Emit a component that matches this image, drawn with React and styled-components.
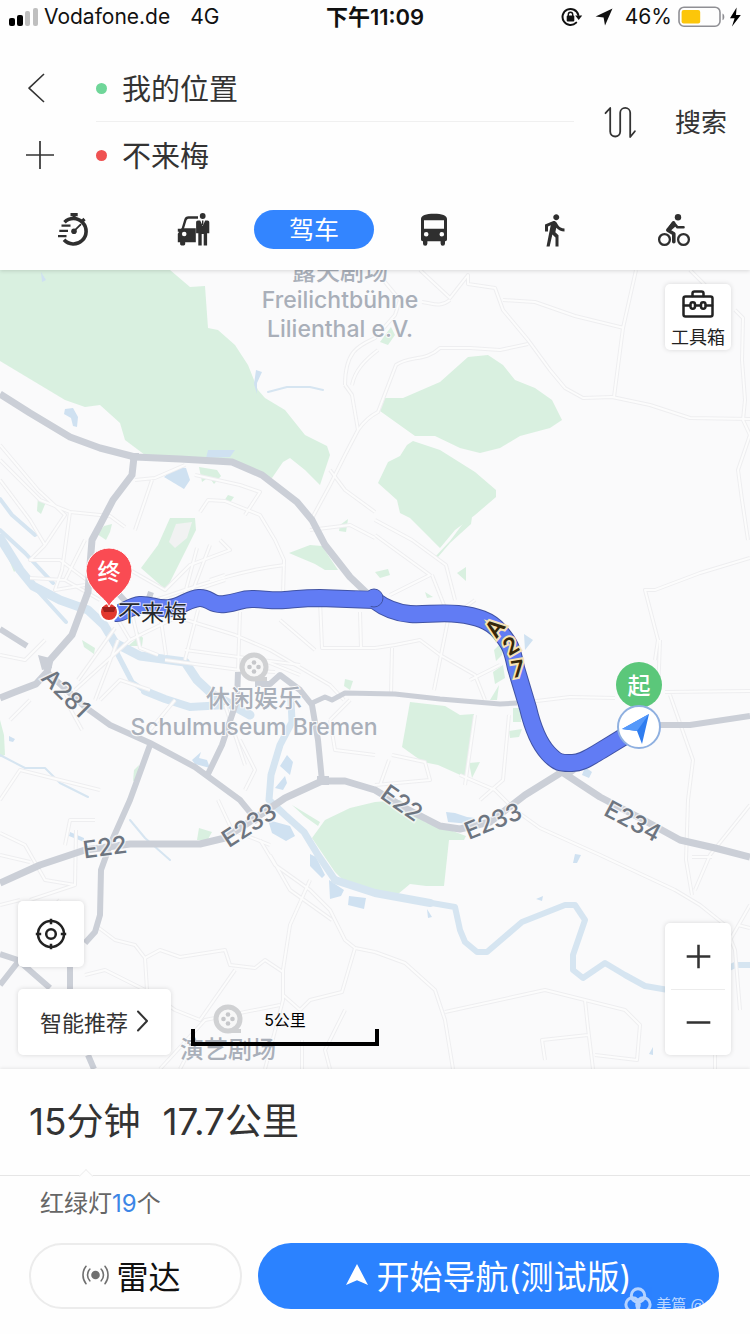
import React from 'react';
import styled, { createGlobalStyle } from 'styled-components';
import { MdDirectionsWalk } from 'react-icons/md';

const GlobalStyle = createGlobalStyle`
  *, *::before, *::after { box-sizing: border-box; }
  body {
    margin: 0;
    background: #fefefe;
    color: #333;
    font-family: Inter, 'Noto Sans CJK SC', sans-serif;
  }
  button, input { font: inherit; color: inherit; border: 0; padding: 0; background: none; }
  button { cursor: pointer; }
  svg { display: block; flex: none; }
`;

const Screen = styled.div`
  display: flex;
  flex-direction: column;
  min-height: 100vh;
`;

/* ---------- status bar ---------- */

const StatusBar = styled.div`
  display: grid;
  grid-template-columns: 1fr auto 1fr;
  align-items: center;
  height: 34px;
  padding: 0 8px;
  color: #111;
  font-size: 21px;
  line-height: 32px;
`;

const StatusGroup = styled.div`
  display: flex;
  align-items: center;
  justify-content: ${(p) => (p.$end ? 'flex-end' : 'flex-start')};
  gap: ${(p) => p.$gap}px;
`;

const Clock = styled.time`
  font-size: 22px;
  font-weight: 600;
`;

/* ---------- header ---------- */

const Header = styled.header`
  position: relative;
  z-index: 2;
  background: #fefefe;
  box-shadow: 0 1px 4px rgba(0, 0, 0, 0.14);
`;

const RouteForm = styled.form`
  display: flex;
  align-items: center;
  padding: 21px 23px 0 0;
`;

const SideButtons = styled.div`
  display: flex;
  flex-direction: column;
  width: 96px;
`;

const IconButton = styled.button`
  display: flex;
  align-items: center;
  height: 67px;
  padding: 0 0 2px 24px;
`;

const Fields = styled.div`
  flex: 1;
  min-width: 0;
`;

const Field = styled.label`
  display: flex;
  align-items: center;
  gap: 15px;
  height: 67px;
  border-bottom: ${(p) => (p.$divided ? '1px solid #f0f0f0' : '0')};

  &::before {
    content: '';
    width: 11px;
    height: 11px;
    border-radius: 50%;
    background: ${(p) => p.$dot};
  }

  input {
    flex: 1;
    min-width: 0;
    height: 46px;
    padding-bottom: 3px;
    font-size: 29px;
    outline: none;
  }
`;

const SwapButton = styled.button`
  margin: 0 38px 0 30px;
`;

const SearchButton = styled.button`
  padding-top: 2px;
  font-size: 26px;
  line-height: 40px;
`;

const ModeBar = styled.nav`
  display: flex;
  padding: 21px 16px 21px 14px;
`;

const ModeButton = styled.button`
  flex: 1;
  display: flex;
  align-items: center;
  justify-content: center;
  height: 39px;
  border-radius: 20px;
  font-size: 25px;
  line-height: 36px;
  color: ${(p) => (p.$active ? '#fff' : '#2f2f2f')};
  background: ${(p) => (p.$active ? '#3385ff' : 'transparent')};
`;

/* ---------- map ---------- */

const MapArea = styled.main`
  position: relative;
  flex: 1;
  min-height: 799px;
  overflow: hidden;
  background: #fafafb;
`;

const MapSvg = styled.svg`
  position: absolute;
  inset: 0;
  width: 100%;
  height: 100%;
`;

const PlaceText = styled.text`
  font-size: ${(p) => p.$size || 23}px;
  font-weight: 500;
  fill: #a9afb9;
  text-anchor: middle;
  paint-order: stroke;
  stroke: #fafafb;
  stroke-width: 2px;
`;

const RoadText = styled.text`
  font-size: 24px;
  font-weight: 500;
  fill: #6d7580;
  text-anchor: middle;
  dominant-baseline: central;
  paint-order: stroke;
  stroke: rgba(250, 250, 251, 0.7);
  stroke-width: 3px;
`;

const ShieldText = styled(RoadText)`
  font-size: 23px;
  font-weight: 600;
  fill: #35270a;
  stroke: #f6e3b4;
  stroke-width: 4px;
`;

const PinText = styled.text`
  font-size: 23px;
  font-weight: 500;
  fill: #fff;
  text-anchor: middle;
`;

const CityText = styled.text`
  font-size: 23px;
  font-weight: 400;
  fill: #26282c;
  paint-order: stroke;
  stroke: rgba(255, 255, 255, 0.8);
  stroke-width: 2px;
`;

const MapControls = styled.div`
  position: absolute;
  inset: 0;
  display: flex;
  align-items: flex-end;
  padding: 14px 19px 14px 18px;
`;

const ControlColumn = styled.div`
  display: flex;
  flex-direction: column;
  justify-content: ${(p) => (p.$spread ? 'space-between' : 'flex-end')};
  gap: 22px;
  height: 100%;
  margin-left: ${(p) => (p.$spread ? 'auto' : '0')};
`;

const Card = styled.div`
  width: 66px;
  border-radius: 5px;
  background: #fff;
  box-shadow: 0 0 5px rgba(0, 0, 0, 0.14);
`;

const SquareButton = styled(Card).attrs({ as: 'button' })`
  display: flex;
  flex-direction: column;
  align-items: center;
  justify-content: center;
  gap: 8px;
  height: 66px;
  padding-top: ${(p) => (p.$labelled ? 6 : 0)}px;
  font-size: 18px;
  line-height: 24px;
  color: #222;
`;

const RecommendButton = styled(Card).attrs({ as: 'button' })`
  display: flex;
  align-items: center;
  justify-content: center;
  gap: 8px;
  width: 153px;
  height: 66px;
  padding-bottom: 3px;
  font-size: 22px;
`;

const ZoomCard = styled(Card)`
  padding: 0 6px;

  button {
    display: flex;
    align-items: center;
    justify-content: center;
    width: 100%;
    height: 66px;
  }

  button + button {
    border-top: 1px solid #ececec;
  }
`;

const ScaleBar = styled.div`
  width: 188px;
  height: 36px;
  margin: 0 0 9px 20px;
  font-size: 16px;
  line-height: 20px;
  text-align: center;
  color: #000;

  &::after {
    content: '';
    display: block;
    height: 17px;
    margin-top: -1px;
    border: solid #000;
    border-width: 0 4px 4px;
  }
`;

/* ---------- bottom panel ---------- */

const Panel = styled.footer`
  position: relative;
  z-index: 2;
  background: #fefefe;
  box-shadow: 0 -1px 3px rgba(0, 0, 0, 0.08);
`;

const Summary = styled.h1`
  position: relative;
  display: flex;
  gap: 22px;
  margin: 0;
  padding: 26px 29px;
  border-bottom: 1px solid #e6e6e6;
  font-size: 37px;
  font-weight: 400;
  line-height: 54px;

  &::after {
    content: '';
    position: absolute;
    left: 81px;
    bottom: -6px;
    width: 10px;
    height: 10px;
    border: solid #f0f0f0;
    border-width: 1px 0 0 1px;
    background: #fefefe;
    transform: rotate(45deg);
  }
`;

const Lights = styled.p`
  margin: 0;
  padding: 10px 40px 21px;
  color: #666;
  font-size: 24px;
  line-height: 36px;

  b {
    color: #3c86e6;
    font-weight: 400;
  }
`;

const Actions = styled.div`
  display: flex;
  gap: 16px;
  padding: 0 31px 26px 29px;
`;

const ActionButton = styled.button`
  position: relative;
  display: flex;
  align-items: center;
  justify-content: center;
  gap: 7px;
  flex: ${(p) => (p.$primary ? '1 1 0' : '0 0 213px')};
  height: 66px;
  padding: ${(p) => (p.$primary ? '0 0 3px' : '0 8px 3px 0')};
  overflow: hidden;
  border: ${(p) => (p.$primary ? '0' : '2px solid #ececec')};
  border-radius: 33px;
  font-size: ${(p) => (p.$primary ? 33 : 32)}px;
  color: ${(p) => (p.$primary ? '#fff' : '#111')};
  background: ${(p) => (p.$primary ? '#2b82ff' : '#fefefe')};
`;

const Watermark = styled.span`
  position: absolute;
  right: 14px;
  bottom: -6px;
  display: flex;
  align-items: flex-end;
  gap: 4px;
  font-size: 15px;
  line-height: 20px;
  color: rgba(255, 255, 255, 0.7);
`;

/* ---------- icons ---------- */

const line = { fill: 'none', stroke: 'currentColor', strokeLinecap: 'round', strokeLinejoin: 'round' };

const SignalIcon = () => (
  <svg width="32" height="20" viewBox="0 0 32 20">
    <rect x="1" y="11" width="6" height="8" rx="2" fill="#000" />
    <rect x="9" y="8" width="6" height="11" rx="2" fill="#000" />
    <rect x="17" y="4" width="5" height="15" rx="2" fill="#bfbfbf" />
    <rect x="25" y="1" width="5" height="18" rx="2" fill="#bfbfbf" />
  </svg>
);

const RotationLockIcon = () => (
  <svg width="22" height="20" viewBox="0 0 22 20">
    <path d="M15.2 15.6A8 8 0 1 1 17.3 8" {...line} strokeWidth="2" />
    <path d="M14.2 8.5h7l-3.5 4.6z" fill="currentColor" />
    <rect x="5.7" y="8.6" width="7.6" height="6" rx="1" fill="currentColor" />
    <path d="M7.3 9V7.4a2.2 2.2 0 0 1 4.4 0V9" {...line} strokeWidth="1.4" />
  </svg>
);

const LocationIcon = () => (
  <svg width="18" height="18" viewBox="0 0 18 18">
    <path d="M17.5.5 10 17.5 8.6 9.6.6 8.4z" fill="currentColor" />
  </svg>
);

const BatteryIcon = () => (
  <svg width="64" height="22" viewBox="0 0 64 22">
    <rect x="1" y="1.2" width="41" height="19" rx="5" fill="none" stroke="#8f8f94" strokeWidth="1.6" />
    <rect x="3.6" y="4" width="18.6" height="13.6" rx="2" fill="#fcc60a" />
    <path d="M44.5 7.5c2.4 1 2.4 5.8 0 6.8z" fill="#8f8f94" />
    <path d="M58.6 1.5 52 12.200h4.600L54 20.500l8.800-11.600H58z" fill="#000" />
  </svg>
);

const BackIcon = () => (
  <svg width="26" height="32" viewBox="0 0 26 32">
    <path d="M20 2 5 16.200 20 30" {...line} strokeWidth="1.600" strokeLinecap="butt" />
  </svg>
);

const PlusIcon = ({ size = 32, weight = 1.7 }) => (
  <svg width={size} height={size} viewBox="0 0 32 32">
    <path d="M2 16h28M16 2v28" fill="none" stroke="currentColor" strokeWidth={weight} />
  </svg>
);

const MinusIcon = () => (
  <svg width="27" height="27" viewBox="0 0 32 32">
    <path d="M2 16h28" fill="none" stroke="currentColor" strokeWidth="3" />
  </svg>
);

const SwapIcon = () => (
  <svg width="33" height="33" viewBox="0 0 33 33">
    <path d="M1.500 7.200 6.200 2v23.500a5 5 0 0 0 10 0V6.800a5 5 0 0 1 10 0V31l4.700-5.700" {...line} strokeWidth="1.800" />
  </svg>
);

const TimerIcon = () => (
  <svg width="34" height="36" viewBox="0 0 34 36">
    <path d="M7.500 10.200A12.700 12.700 0 1 1 7 27.800" fill="none" stroke="currentColor" strokeWidth="3.600" />
    <path d="M13.500 2.600h7.200M17.100 3v4M24.700 9.800l2.800-2.800" fill="none" stroke="currentColor" strokeWidth="3.200" />
    <path d="M17 19.200l6.500-6.500" {...line} strokeWidth="1.800" />
    <circle cx="17" cy="19.300" r="2.800" fill="currentColor" />
    <path d="M4.500 13.700h9M2.300 18.800h8.700M1 24.100h8.500" {...line} strokeWidth="2.200" strokeLinecap="butt" />
  </svg>
);

const TaxiIcon = () => (
  <svg width="34" height="36" viewBox="0 0 34 36">
    <path d="M21 5.500H11.500c-1.800 0-2.600.8-3.100 2.400L5.500 17.500" fill="none" stroke="currentColor" strokeWidth="2.400" />
    <path d="M.8 16.800h3.500v3H.8zM4.500 16.300h14.300v14H8.200v1.800a1.400 1.400 0 0 1-1.400 1.400H4.500a1.400 1.400 0 0 1-1.400-1.400v-1.800H.8v-8.500z" fill="currentColor" />
    <circle cx="7.200" cy="22" r="2.300" fill="#fefefe" />
    <circle cx="25.700" cy="4" r="2.900" fill="currentColor" />
    <path d="M21 8.400h2.200l2.500 5.500 2.500-5.500h2.200c1.300 0 1.900.8 1.900 2v10.800h-2.200v12.300h-3.400V22h-2v11.500h-3.400V21.200h-2.200V10.400c0-1.200.6-2 1.900-2z" fill="currentColor" />
    <path d="M25 8.400h1.400v4.500H25z" fill="currentColor" />
  </svg>
);

const BusIcon = () => (
  <svg width="32" height="36" viewBox="0 0 32 36">
    <path
      fillRule="evenodd"
      fill="currentColor"
      d="M3 7c0-3.500 5-5.200 13-5.200S29 3.500 29 7v20.500a1.800 1.800 0 0 1-1.800 1.800H27v2.200a2.200 2.200 0 0 1-4.400 0v-2.200H9.400v2.200a2.200 2.200 0 0 1-4.400 0v-2.200h-.2A1.800 1.800 0 0 1 3 27.500zM6 8.200v8.500h20V8.200zM8.200 20a2.300 2.300 0 1 0 0 4.600 2.300 2.300 0 0 0 0-4.600zM23.800 20a2.300 2.300 0 1 0 0 4.600 2.300 2.300 0 0 0 0-4.600z"
    />
  </svg>
);

const BikeIcon = () => (
  <svg width="34" height="36" viewBox="0 0 34 36">
    <circle cx="7.500" cy="27.500" r="5.400" {...line} strokeWidth="2.300" />
    <circle cx="26.500" cy="27.500" r="5.400" {...line} strokeWidth="2.300" />
    <circle cx="21" cy="5.300" r="3.200" fill="currentColor" />
    <path d="M16.500 11 10.800 18.200l6 3.600v8" {...line} strokeWidth="3.600" />
    <path d="M16.500 10.500l4 4.800h6" {...line} strokeWidth="2.600" />
    <path d="M15 10l4.500 3.500-5.500 5-3.500-1.500z" fill="currentColor" />
  </svg>
);

const ToolboxIcon = () => (
  <svg width="32" height="28" viewBox="0 0 32 28">
    <g {...line} strokeWidth="2.500">
      <rect x="1.500" y="6.500" width="29" height="20" rx="2" />
      <path d="M10.500 6V3.500a2 2 0 0 1 2-2h7a2 2 0 0 1 2 2V6M2 15.500h6M13.500 15.500h5M24 15.500h6" />
      <rect x="8.500" y="12.300" width="4.500" height="6.400" rx="2.200" />
      <rect x="19" y="12.300" width="4.500" height="6.400" rx="2.200" />
    </g>
  </svg>
);

const LocateIcon = () => (
  <svg width="32" height="32" viewBox="0 0 32 32">
    <g {...line} strokeWidth="2.500" strokeLinecap="butt">
      <circle cx="16" cy="16" r="13" />
      <circle cx="16" cy="16" r="4.800" />
      <path d="M16 .8v5.400M16 25.800v5.400M.8 16h5.400M25.800 16h5.400" />
    </g>
  </svg>
);

const ChevronIcon = () => (
  <svg width="13" height="22" viewBox="0 0 13 22">
    <path d="M2 1.500 11 11 2 20.500" {...line} strokeWidth="2" />
  </svg>
);

const RadarIcon = () => (
  <svg width="27" height="22" viewBox="0 0 27 22" color="#707070">
    <circle cx="13.500" cy="11" r="4.300" fill="currentColor" />
    <path d="M7.800 5.200a8.500 8.500 0 0 0 0 11.600M4 2.300a14 14 0 0 0 0 17.400M19.200 5.200a8.500 8.500 0 0 1 0 11.600M23 2.300a14 14 0 0 1 0 17.400" {...line} strokeWidth="1.600" />
  </svg>
);

const NavigateIcon = () => (
  <svg width="24" height="23" viewBox="0 0 24 23">
    <path d="M12 1 23 22 12 17.200 1 22z" fill="currentColor" />
  </svg>
);

const KnotIcon = () => (
  <svg width="28" height="28" viewBox="0 0 28 28">
    <g fill="none" stroke="#fff" strokeWidth="3" opacity=".65">
      <circle cx="14" cy="8.500" r="6.700" />
      <circle cx="8.600" cy="17.500" r="6.700" />
      <circle cx="19.400" cy="17.500" r="6.700" />
    </g>
  </svg>
);

/* ---------- map data ---------- */

const parks = [
  'M0 270H170L190 287 205 286 208 328 218 330 235 345 248 365 258 390 265 398 285 410 305 435 327 446 330 455 320 485 305 470 290 458 283 462 272 478 260 475 233 460 145 455 125 440 120 423 100 405 85 407 65 400 0 361Z',
  'M385 398H403L440 382 468 357 488 355 503 365 515 380 535 388 552 400 562 420 550 428 520 436 500 448 480 453 460 448 435 436H415L380 411Z',
  'M413 441 440 450 475 472 496 490V497L475 515 455 530 440 548 430 538 410 518 400 513 397 500 378 483 388 462 400 456 407 445Z',
  'M435 557 450 541 467 518 472 517 471 524 450 543 438 557Z',
  'M410 702 445 706 460 715 474 714 467 778 438 765 423 762 402 747Z',
  'M312 838 325 820 350 808 375 802 400 800 425 822 450 830 466 836 464 840H449L444 886H426L410 884 398 894 375 893 350 887 335 872Z',
  'M170 518H195L196 530 166 590 141 568 158 545Z',
  'M289 553 310 545 322 546 338 570 325 570 315 564 296 556Z',
  'M199 467 217 470 221 476 214 484 209 477 202 482Z',
  'M104 526 112 524 110 532 106 540 97 534Z',
  'M38 497 46 502 41 514 37 511Z',
  'M199 828 212 832 207 841 197 840Z',
  'M380 342 391 327 395 335 388 345Z',
  'M457 573 466 567 466 581Z M375 572 388 569 390 575 380 578Z M425 592 433 597 427 598Z',
  'M499 645 504 639 502 655 496 661 494 650Z M493 672 503 665 505 678 495 684Z M490 700 499 685 497 700Z',
  'M513 708H521V722H513Z M509 731 522 729 519 737 510 738Z M469 763 480 762 472 778Z',
  'M135 628 143 638 142 646 128 646 135 640Z M82 640 95 648 94 654 84 647Z',
  'M345 679 353 681 350 690 344 686Z M134 770 139 765 137 780 133 781Z',
  'M292 805 320 822 318 826 304 816Z M228 495 234 497 229 504 224 501Z',
  'M340 525 348 519 346 532 339 531Z M0 720 4 735 5 755 0 757Z M10 546 20 566 14 572 7 555Z',
];

const lakes = [
  'M65 409 73 408 78 417 77 427 73 426 71 418 64 414Z M164 477 176 467 186 468 190 480 184 489Z',
  'M208 450 235 450 230 457 206 458Z M256 370 262 372 257 383 257 394 254 384Z',
  'M524 634 533 640 525 650Z M585 767 592 772 589 778 582 775Z',
  'M268 820 290 826 295 836 286 841 272 833Z M310 854 316 857 325 875 322 878 310 866Z',
  'M329 880 344 890 341 896 330 899Z M349 896 366 898 364 909 348 905Z',
  'M446 812 455 813 467 817 475 818 470 824 448 822Z M575 854 581 855 577 863 573 863Z',
  'M536 899 543 896 542 901Z M427 909 432 917 428 918Z M649 1054 653 1047 653 1055Z',
  'M280 766 287 755 293 762 290 775Z M275 788 285 776 287 783 283 790Z M192 760 201 752 199 758 207 760 210 768 195 764Z',
  'M41 272 46 280 42 282Z M9 736 15 739 13 742 9 741Z M70 832 84 838 84 842 69 836Z',
];

const rivers = [
  [9, 'M0 538 20 570 33 586 60 600 88 610 104 625 115 643 140 656 185 662 197 680 212 694 250 715'],
  [4, 'M0 530 25 553 53 583 M35 588 66 622'],
  [5, 'M108 630 118 655 132 682 145 691'],
  [8, 'M145 691 165 699 190 707 225 705'],
  [7, 'M291 700 292 722 280 745 271 775 269 800 285 815 304 832 318 855 335 880'],
  [8, 'M335 880 375 893 430 903'],
  [6, 'M420 901 455 907 460 930 465 942 477 952 487 952 522 922 565 905 575 905 585 920 573 955 573 970 583 978 605 963 625 975 645 986 680 992 735 965H750'],
  [2, 'M0 755 25 768 45 768 60 783 88 797 M268 392 287 387 310 387 323 390 M130 820 145 838 170 860'],
  [4, 'M0 499 12 515 35 535'],
];

const majorRoads = [
  [7, 'M0 394 30 413 70 437 100 448 135 457 180 459 232 462 262 475 297 502 312 520 325 545 350 577 372 598'],
  [7, 'M134 457 132 475 113 500 100 525 92 540 90 565 88 592 72 635 50 660 47 672 36 684 15 692 0 698'],
  [6, 'M0 629 27 646 M47 672 85 707 110 725 150 743 195 767 240 800 258 822'],
  [7, 'M0 883 40 865 85 850 130 844H200L225 838 260 815 285 798 322 781 345 781 375 790 405 808 440 826 460 829 490 822 525 795 562 772 600 797 640 818 680 840 715 848 750 857'],
  [6, 'M150 745 130 800 110 845 101 870 100 915 95 932 85 943 M70 965V990 M0 954 18 960 35 975 50 988 M18 962 0 985 M88 1055 94 1069'],
  [6, 'M238 672 237 700 222 745 208 774 M255 684H270L280 675 300 690 312 705 318 740 322 781'],
  [5, 'M312 703 325 697 332 700 345 693 395 694 440 699 500 704 517 703'],
  [6, 'M655 725 690 725 750 716 M115 590 126 602 M151 592 149 598'],
];

const minorRoads = [
  'M310 522 330 485 345 455 358 430 352 395 345 385 M345 385C345 350 360 345 375 338L395 315 400 300 375 270',
  'M352 385C355 370 365 360 378 350 M358 430C365 420 372 415 378 412 L396 365C410 355 425 362 440 348H470L500 350 528 344',
  'M420 270 450 298 468 275V284L495 288 503 310 528 340 550 370 565 388 583 398 612 397 650 405 690 418 750 419',
  'M503 300 535 302 575 316 624 328 M636 270 623 328 614 397 M450 300C440 308 432 303 422 302 M690 270 710 290',
  'M735 310 743 318 742 360 745 400 743 420 750 435 738 470 742 500 748 540',
  'M0 445 38 490 65 515 45 545 M0 460 40 500 70 512 110 516 125 527 M135 480 155 478 185 465 M152 480 135 530',
  'M200 512 208 500 225 501 260 515 275 540 284 560 283 595 M195 475 240 485 260 492 245 515 M330 470 345 490 375 512 M310 530 350 525 375 538',
  'M70 512 62 570 55 590 85 585 M45 545 30 560 60 560 100 590 M0 480 30 520 45 545 M130 570 165 590 190 565 230 550 220 540',
  'M197 548 184 597 M155 600C200 585 240 570 285 565 M210 545 193 590',
  'M170 615 235 635 270 650 330 685 344 700 M130 640 187 612 M185 660 198 610 M160 614 166 655 M240 612 238 670',
  'M320 600 322 648 H375 M360 612 361 648 M375 648 395 645 420 640 440 655 475 675 485 700 M250 655 300 675 M315 650 280 620',
  'M392 648 391 694 M434 690 448 620 475 600 M470 680 500 665 M375 520 412 540 446 565 455 600 M375 535 430 575 390 595 M432 575 446 610',
  'M100 590 130 640 75 690 M115 628 78 680 M118 640 95 700 M60 690 82 730 M85 540 65 580 100 600 M65 580 30 578',
  'M165 660 240 670 275 672 M185 650 300 665 M130 605 140 648 158 655 M285 600 235 605 M210 580 225 575',
  'M520 703 570 697 615 698 M665 692 750 691 M655 660 658 640 645 590H655L700 573 750 558 M660 640 658 695 M670 695 693 760 688 800 686 860 692 895',
  'M475 715 465 785 M509 715 503 780 480 800 M389 760 380 785 M392 755 425 762 430 780 375 785 M460 775 495 790 515 810 540 828 600 855 675 890 700 905 725 925 735 950 740 1010',
  'M750 805 710 855 695 890 M692 857H712 M375 952 405 963 435 990 445 1020 453 1069 M445 1012 545 990 585 1000 625 1010 640 1025 637 1060 595 1055',
  'M585 1000 588 1028 593 1069 M588 1035 542 1040 545 1060 M738 925 750 928 M730 940 750 905 M715 1069V1055',
  'M260 840 275 865 310 890 330 910 345 940 355 948 375 952 M270 855 290 890 332 920 M310 880 290 925 283 970 283 1000 265 1069',
  'M355 948 342 992 310 1000 300 1010 M95 925 115 940 135 945 145 958 160 950 180 957 225 950 230 965 255 968 265 960 283 972',
  'M145 958 147 990 175 1010 200 1020 235 970 M85 975 105 970 145 990 M283 995 300 1010 M160 1069 205 1020 280 1005',
  'M0 833 25 845 45 880 75 885 76 830 M0 855 30 862 M75 885 30 900 M65 845 70 820 95 820 M218 800 232 830 270 845',
  'M0 800 20 770 100 790 M330 720 335 750 375 755 M330 720 350 700 M240 740 255 770 245 790 M225 705 245 765',
  'M330 1069 325 1050 345 1010 M180 1069 190 1050 M302 1069V1040 M60 900 40 920 M20 900 0 905',
  'M175 700 150 730 M100 700 120 680 150 690 M30 700 10 720 M0 655 25 660 45 640 M190 610 195 590 225 580',
];

const ROUTE = 'M116 613C122 614 130 606 140 605S158 610 170 608 188 599 199 598 210 606 225 604 240 599 252 599 272 601 285 600 305 598 320 598L374 600C382 606 395 613 410 614S440 612 458 614 490 620 500 632 512 648 516 668L528 708C532 725 538 742 548 753S562 763 572 763 590 757 602 750L638 728';

const roadLabels = [
  { text: 'A281', x: 66, y: 693, angle: 45 },
  { text: 'E22', x: 105, y: 847, angle: -8 },
  { text: 'E233', x: 249, y: 825, angle: -33 },
  { text: 'E22', x: 402, y: 803, angle: 35 },
  { text: 'E233', x: 493, y: 821, angle: -22 },
  { text: 'E234', x: 633, y: 821, angle: 28 },
];

const routeLabels = [
  { text: 'A', x: 495, y: 628, angle: -52 },
  { text: '2', x: 511, y: 646, angle: -30 },
  { text: '7', x: 518, y: 669, angle: -10 },
];

const Cinema = ({ x, y }) => (
  <g transform={`translate(${x} ${y})`}>
    <circle r="12" fill="#f7f7f7" stroke="#d0d1d3" strokeWidth="5" />
    <path d="M3 12h10" stroke="#d0d1d3" strokeWidth="4" />
    <g fill="#c6c7ca">
      <circle cy="-4.500" r="2.300" />
      <circle cy="4.500" r="2.300" />
      <circle cx="-4.500" r="2.300" />
      <circle cx="4.500" r="2.300" />
    </g>
  </g>
);

const CityMap = () => (
  <MapSvg viewBox="0 270 750 799" preserveAspectRatio="xMidYMid slice" role="img" aria-label="不来梅地图">
    <g fill="#d9f0e0">{parks.map((d) => <path key={d} d={d} />)}</g>
    <path d="M176 524 192 522 187 538 175 548 169 542Z" fill="#f1f2f2" />
    <g fill="#cfe1f1">{lakes.map((d) => <path key={d} d={d} />)}</g>
    <g fill="none" stroke="#d6e5f1" strokeLinejoin="round" strokeLinecap="round">
      {rivers.map(([w, d]) => <path key={d} d={d} strokeWidth={w} />)}
    </g>
    <g fill="none" stroke="#eeeef0" strokeWidth="4" strokeLinejoin="round">
      {minorRoads.map((d) => <path key={d} d={d} />)}
    </g>
    <g fill="none" stroke="#fcfcfc" strokeWidth="2" strokeLinejoin="round">
      {minorRoads.map((d) => <path key={d} d={d} />)}
    </g>
    <g fill="none" stroke="#cbcfd7" strokeLinejoin="round">
      {majorRoads.map(([w, d]) => <path key={d} d={d} strokeWidth={w} />)}
    </g>
    <path d="M555 770 565 766 576 772 568 778Z M130 453h9v7h-9Z M38 655 50 658 52 668 42 670Z M317 776h12v9h-12Z" fill="#cbcfd7" />

    <PlaceText x="340" y="280" $size={24}>露天剧场</PlaceText>
    <PlaceText x="340" y="308">Freilichtbühne</PlaceText>
    <PlaceText x="340" y="337">Lilienthal e.V.</PlaceText>
    <Cinema x={254} y={667} />
    <PlaceText x="254" y="707" $size={24}>休闲娱乐</PlaceText>
    <PlaceText x="254" y="735">Schulmuseum Bremen</PlaceText>
    <Cinema x={228} y={1019} />
    <PlaceText x="228" y="1058" $size={24}>演艺剧场</PlaceText>
    {roadLabels.map((r) => (
      <RoadText key={`${r.text}-${r.x}`} transform={`translate(${r.x} ${r.y}) rotate(${r.angle})`}>{r.text}</RoadText>
    ))}

    <g fill="none" strokeLinejoin="round">
      <path d={ROUTE} stroke="#4153a4" strokeWidth="18" />
      <path d={ROUTE} stroke="#617cf4" strokeWidth="16" />
      <circle cx="374" cy="598" r="9" fill="#617cf4" stroke="#4153a4" />
      <path d="M355 599h16" stroke="#617cf4" strokeWidth="15" />
    </g>
    {routeLabels.map((r) => (
      <ShieldText key={r.text} transform={`translate(${r.x} ${r.y}) rotate(${r.angle})`}>{r.text}</ShieldText>
    ))}

    <circle cx="109" cy="612" r="9" fill="#e2392f" stroke="#fff" strokeWidth="2" />
    <path d="M102 607h14l-2 5h-10z" fill="#9e1f1b" />
    <path d="M109 607C106 597 86 590 86 571a23 23 0 1 1 46 0C132 590 112 597 109 607Z" fill="#fa4b53" stroke="#fff" />
    <PinText x="109" y="580">终</PinText>
    <CityText x="118" y="621">不来梅</CityText>

    <circle cx="639" cy="685" r="23" fill="#5bc77a" />
    <PinText x="639" y="694">起</PinText>
    <circle cx="639" cy="727" r="21" fill="#fff" stroke="#8fb0e0" strokeWidth="2" />
    <path d="M649 714 642 744 637 731 622 729Z" fill="#2f7df0" />
    <path d="M649 714 637 731 622 729Z" fill="#5599fa" />
  </MapSvg>
);

const modes = [
  { id: 'smart', label: '智能', icon: <TimerIcon /> },
  { id: 'taxi', label: '打车', icon: <TaxiIcon /> },
  { id: 'drive', label: '驾车' },
  { id: 'bus', label: '公交', icon: <BusIcon /> },
  { id: 'walk', label: '步行', icon: <MdDirectionsWalk size={36} /> },
  { id: 'bike', label: '骑行', icon: <BikeIcon /> },
];

export default function App() {
  return (
    <Screen>
      <GlobalStyle />
      <Header>
        <StatusBar>
          <StatusGroup $gap={4}>
            <SignalIcon />
            <StatusGroup $gap={20}>
              <span>Vodafone.de</span>
              <span>4G</span>
            </StatusGroup>
          </StatusGroup>
          <Clock>下午11:09</Clock>
          <StatusGroup $end $gap={12}>
            <RotationLockIcon />
            <LocationIcon />
            <StatusGroup $gap={6}>
              <span>46%</span>
              <BatteryIcon />
            </StatusGroup>
          </StatusGroup>
        </StatusBar>

        <RouteForm onSubmit={(e) => e.preventDefault()}>
          <SideButtons>
            <IconButton type="button" aria-label="返回"><BackIcon /></IconButton>
            <IconButton type="button" aria-label="添加途经点"><PlusIcon /></IconButton>
          </SideButtons>
          <Fields>
            <Field $dot="#6fd699" $divided>
              <input type="text" aria-label="起点" defaultValue="我的位置" />
            </Field>
            <Field $dot="#ef5252">
              <input type="text" aria-label="终点" defaultValue="不来梅" />
            </Field>
          </Fields>
          <SwapButton type="button" aria-label="交换起终点"><SwapIcon /></SwapButton>
          <SearchButton type="submit">搜索</SearchButton>
        </RouteForm>

        <ModeBar>
          {modes.map((m) => (
            <ModeButton key={m.id} type="button" aria-label={m.label} $active={!m.icon} aria-pressed={!m.icon}>
              {m.icon || m.label}
            </ModeButton>
          ))}
        </ModeBar>
      </Header>

      <MapArea>
        <CityMap />
        <MapControls>
          <ControlColumn>
            <SquareButton type="button" aria-label="定位"><LocateIcon /></SquareButton>
            <RecommendButton type="button">
              智能推荐
              <ChevronIcon />
            </RecommendButton>
          </ControlColumn>
          <ScaleBar>5公里</ScaleBar>
          <ControlColumn $spread>
            <SquareButton type="button" $labelled>
              <ToolboxIcon />
              工具箱
            </SquareButton>
            <ZoomCard>
              <button type="button" aria-label="放大"><PlusIcon size={27} weight={3} /></button>
              <button type="button" aria-label="缩小"><MinusIcon /></button>
            </ZoomCard>
          </ControlColumn>
        </MapControls>
      </MapArea>

      <Panel>
        <Summary>
          <span>15分钟</span>
          <span>17.7公里</span>
        </Summary>
        <Lights>红绿灯<b>19</b>个</Lights>
        <Actions>
          <ActionButton type="button">
            <RadarIcon />
            雷达
          </ActionButton>
          <ActionButton type="button" $primary>
            <NavigateIcon />
            开始导航(测试版)
            <Watermark>
              <KnotIcon />
              美篇 @
            </Watermark>
          </ActionButton>
        </Actions>
      </Panel>
    </Screen>
  );
}
